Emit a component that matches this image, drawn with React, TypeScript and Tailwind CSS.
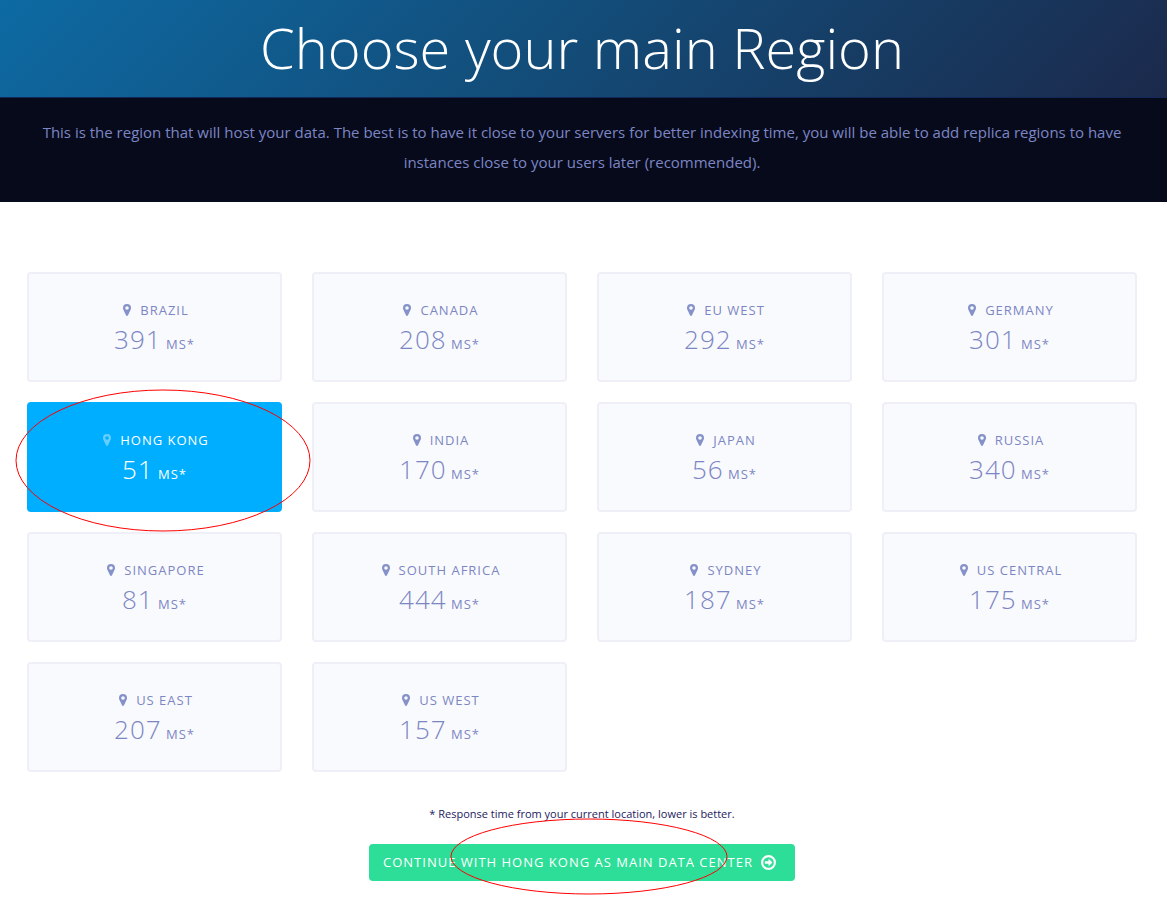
import { useState } from "react";

type Region = { name: string; latency: number };

const regions: Region[] = [
  { name: "Brazil", latency: 391 },
  { name: "Canada", latency: 208 },
  { name: "EU West", latency: 292 },
  { name: "Germany", latency: 301 },
  { name: "Hong Kong", latency: 51 },
  { name: "India", latency: 170 },
  { name: "Japan", latency: 56 },
  { name: "Russia", latency: 340 },
  { name: "Singapore", latency: 81 },
  { name: "South Africa", latency: 444 },
  { name: "Sydney", latency: 187 },
  { name: "US Central", latency: 175 },
  { name: "US East", latency: 207 },
  { name: "US West", latency: 157 },
];

function MarkerIcon({ className }: { className: string }) {
  return (
    <svg viewBox="0 0 14 14" className={`size-[14px] ${className}`} fill="currentColor" aria-hidden="true">
      <path
        fillRule="evenodd"
        d="M7 1a4 4 0 0 1 4 4c0 .7-.1 1.200-.4 1.800L8 12.200c-.2.5-.6.800-1 .800s-.8-.3-1-.8L3.400 6.800C3.100 6.200 3 5.700 3 5a4 4 0 0 1 4-4zm0 2.200a1.800 1.800 0 1 0 0 3.600 1.800 1.800 0 0 0 0-3.600z"
      />
    </svg>
  );
}

function ArrowCircleIcon() {
  return (
    <svg viewBox="128 128 1536 1536" className="size-[15px]" fill="currentColor" aria-hidden="true">
      <path d="M1285 896q0 14-9 23l-320 320q-9 9-23 9-13 0-22.5-9.5t-9.5-22.5v-192h-352q-13 0-22.5-9.5t-9.5-22.5v-192q0-13 9.5-22.5t22.5-9.5h352v-192q0-14 9-23t23-9q12 0 24 10l319 319q9 9 9 23z" />
      <circle cx="896" cy="896" r="656" fill="none" stroke="currentColor" strokeWidth="224" />
    </svg>
  );
}

function Highlight({ className }: { className: string }) {
  return (
    <svg
      viewBox="0 0 100 100"
      preserveAspectRatio="none"
      className={`pointer-events-none absolute z-10 max-w-none overflow-visible ${className}`}
      aria-hidden="true"
    >
      <ellipse cx="50" cy="50" rx="50" ry="50" fill="none" stroke="#ff0000" strokeWidth="1" vectorEffect="non-scaling-stroke" />
    </svg>
  );
}

function RegionCard({ region, selected, onSelect }: { region: Region; selected: boolean; onSelect: () => void }) {
  return (
    <button
      type="button"
      aria-pressed={selected}
      onClick={onSelect}
      className={`flex w-full flex-col items-center rounded border-2 px-4 pt-6 pb-5 tracking-[1px] uppercase ${
        selected ? "border-[#00aeff] bg-[#00aeff] text-white" : "border-[#eff0f7] bg-[#f9fafd] text-[#7c86c4]"
      }`}
    >
      <span className={`flex items-center gap-[6px] text-[13px] leading-6 ${selected ? "font-medium" : ""}`}>
        <MarkerIcon className={selected ? "text-[#66ceff]" : "text-[#8591c9]"} />
        {region.name}
      </span>
      <span className={`h-[38px] text-[13px] leading-[34px] ${selected ? "font-medium" : ""}`}>
        <span className="text-[26px] font-light">{region.latency}</span> ms*
      </span>
    </button>
  );
}

export default function App() {
  const [selected, setSelected] = useState("Hong Kong");

  return (
    <div className="bg-white font-['Open_Sans',sans-serif] text-[#7c86c4]">
      <header className="border-b border-[#13285a] bg-[linear-gradient(135deg,#0d6aa3,#134b77_50%,#1b294b)] pt-3 pr-[30px] pb-[14px] pl-[27px] text-center">
        <h1 className="text-[56px] leading-[71px] font-light text-white">Choose your main Region</h1>
      </header>

      <p className="bg-[#070a1b] pt-[19px] pr-[30px] pb-[25px] pl-[27px] text-center text-[15px] leading-[30px]">
        This is the region that will host your data. The best is to have it close to your servers for better indexing
        time, you will be able to add replica regions to have instances close to your users later (recommended).
      </p>

      <main className="pt-[70px] pr-[30px] pb-5 pl-[27px]">
        <ul className="grid grid-cols-4 gap-x-[30px] gap-y-5">
          {regions.map((region) => (
            <li key={region.name} className="relative">
              <RegionCard
                region={region}
                selected={region.name === selected}
                onSelect={() => setSelected(region.name)}
              />
              {region.name === "Hong Kong" && <Highlight className="-top-3 -left-[11px] h-[141px] w-[294px]" />}
            </li>
          ))}
        </ul>

        <div className="mt-8 flex flex-col items-center gap-5">
          <p className="text-[11px] leading-5 text-[#1c2260]">
            * Response time from your current location, lower is better.
          </p>
          <div className="relative">
            <button
              type="button"
              className="flex items-center gap-2 rounded bg-[#2dde98] py-2 pr-[19px] pl-[14px] text-[13px] leading-[21px] tracking-[1px] text-white uppercase"
            >
              Continue with {selected} as main data center
              <ArrowCircleIcon />
            </button>
            <Highlight className="-top-[25px] left-[82px] h-[75px] w-[276px]" />
          </div>
        </div>
      </main>
    </div>
  );
}
